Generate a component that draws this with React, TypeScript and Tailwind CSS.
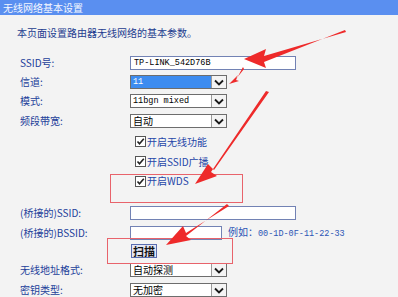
import React from 'react';

const cjk = { fontFamily: '"Noto Sans CJK SC", "Noto Sans", sans-serif' };
const mono = { fontFamily: '"Liberation Mono", "Noto Sans CJK SC", monospace' };

function Label({ children }: { children: React.ReactNode }) {
  return (
    <div className="w-[130px] shrink-0 pl-[20px] text-[10px] leading-none text-[#22409a]" style={cjk}>
      {children}
    </div>
  );
}

function Chevron() {
  return (
    <svg width="10" height="7" viewBox="0 0 10 7">
      <path d="M1 1.5 L5 5.5 L9 1.5" fill="none" stroke="#1a1a1a" strokeWidth="1.8" />
    </svg>
  );
}

function Select({ value, active = false }: { value: string; active?: boolean }) {
  const isLatin = /^[0-9a-z ]+$/.test(value);
  return (
    <div className="flex h-[14px] w-[97px] border border-[#6d6d6d] bg-white">
      <div
        className={`flex flex-1 items-center px-[2px] leading-none ${isLatin ? 'text-[8.5px]' : 'text-[10px]'} ${active ? 'bg-[#3d8cf0] text-white' : 'text-black'}`}
        style={isLatin ? mono : cjk}
      >
        {value}
      </div>
      <div className="flex w-[15px] items-center justify-center border-l border-[#9a9a9a] bg-[#f4f4f4]">
        <Chevron />
      </div>
    </div>
  );
}

function Check({ text, h }: { text: string; h: string }) {
  return (
    <div className={`flex items-center pl-[135px] ${h}`}>
      <div className="flex h-[11px] w-[11px] items-center justify-center border border-[#555] bg-white">
        <svg width="9" height="9" viewBox="0 0 9 9">
          <path d="M1.5 4.5 L3.5 6.8 L7.8 1.8" fill="none" stroke="#222" strokeWidth="1.6" />
        </svg>
      </div>
      <span className="ml-[1px] text-[10px] leading-none text-[#2546a8]" style={cjk}>
        {text}
      </span>
    </div>
  );
}

export default function App() {
  return (
    <div className="relative h-[297px] w-[398px] overflow-hidden bg-[#f3f3f3]">
      <div className="flex h-[15px] items-center bg-[#5a8ff0] pl-[3px] text-[10px] leading-none text-[#f4f7ff]" style={cjk}>
        无线网络基本设置
      </div>

      <div className="mt-[13px] pl-[17px] text-[10px] leading-none text-[#1d3c8f]" style={cjk}>
        本页面设置路由器无线网络的基本参数。
      </div>

      <div className="mt-[15px] flex h-[20px] items-center">
        <Label>SSID号:</Label>
        <div className="flex h-[14px] w-[166px] items-center border border-[#7282b4] bg-white px-[3px] text-[8.5px] leading-none text-black" style={mono}>
          TP-LINK_542D76B
        </div>
      </div>
      <div className="flex h-[18px] items-center">
        <Label>信道:</Label>
        <Select value="11" active />
      </div>
      <div className="flex h-[20px] items-center">
        <Label>模式:</Label>
        <Select value="11bgn mixed" />
      </div>
      <div className="flex h-[20px] items-center">
        <Label>频段带宽:</Label>
        <Select value="自动" />
      </div>
      <Check text="开启无线功能" h="h-[21px]" />
      <Check text="开启SSID广播" h="h-[19px]" />
      <Check text="开启WDS" h="h-[20px]" />

      <div className="mt-[12px] flex h-[20px] items-center">
        <Label>(桥接的)SSID:</Label>
        <div className="h-[14px] w-[166px] border border-[#7282b4] bg-white" />
      </div>
      <div className="flex h-[19px] items-center">
        <Label>(桥接的)BSSID:</Label>
        <div className="h-[14px] w-[92px] border border-[#7282b4] bg-white" />
        <span className="ml-[6px] text-[10px] leading-none text-[#2c55b5]" style={cjk}>
          例如：<span className="text-[8.5px]" style={mono}>00-1D-0F-11-22-33</span>
        </span>
      </div>
      <div className="flex h-[18px] items-center">
        <div className="w-[131px] shrink-0" />
        <div className="flex h-[14px] w-[26px] items-center justify-center border border-[#5a6db0] bg-[#e4e6f4] text-[11px] font-semibold leading-none text-[#111]" style={cjk}>
          扫描
        </div>
      </div>
      <div className="flex h-[20px] items-center">
        <Label>无线地址格式:</Label>
        <Select value="自动探测" />
      </div>
      <div className="flex h-[20px] items-center">
        <Label>密钥类型:</Label>
        <Select value="无加密" />
      </div>

      <div className="pointer-events-none absolute left-[110px] top-[174px] h-[29px] w-[133px] border border-[#e8636b]" />
      <div className="pointer-events-none absolute left-[107px] top-[238px] h-[26px] w-[126px] border border-[#e8636b]" />

      <svg className="pointer-events-none absolute left-0 top-0" width="398" height="297" viewBox="0 0 398 297">
        <g fill="#ee2a2a">
          <path d="M345 30 L346 32 L264 56 L266 49 L244 59 L266 68 L264 62 Z" />
          <path d="M243 67 L244 69 L236 79 L238 75 L229 84 L239 81 L236 80 Z" />
          <path d="M266 91 L269 92 L214 170 L208 164 L195 184 L217 176 L211 172 Z" />
          <path d="M227 204 L229 206 L186 233 L183 226 L166 245 L191 240 L186 236 Z" />
        </g>
      </svg>
    </div>
  );
}
